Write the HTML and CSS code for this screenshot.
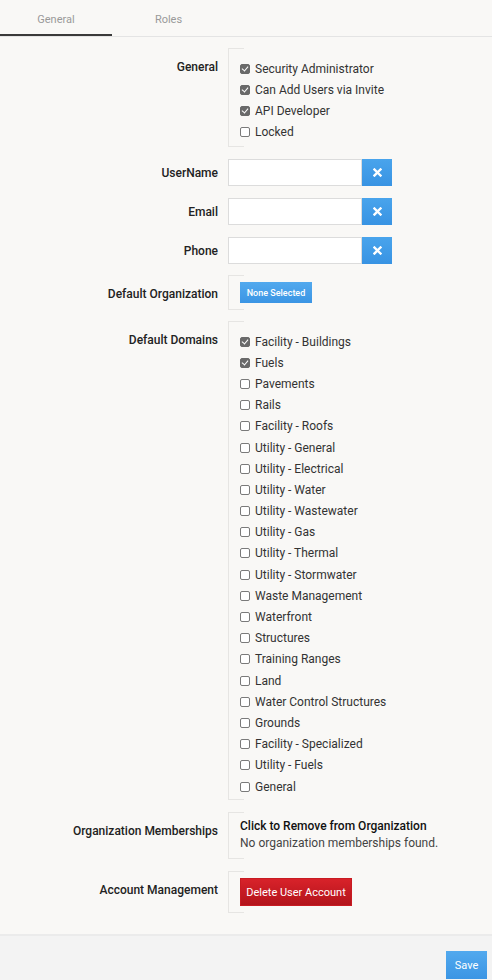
FILE: index.html
```html
<!DOCTYPE html>
<html>
<head>
<meta charset="utf-8">
<link rel="stylesheet" href="styles.css">
</head>
<body>
<div class="tabs">
  <div class="tab active">General</div>
  <div class="tab">Roles</div>
</div>
<div class="content">
  <div class="row">
    <div class="label">General</div>
    <div class="box list">
      <div class="item"><span class="cb on"></span>Security Administrator</div>
      <div class="item"><span class="cb on"></span>Can Add Users via Invite</div>
      <div class="item"><span class="cb on"></span>API Developer</div>
      <div class="item"><span class="cb"></span>Locked</div>
    </div>
  </div>
  <div class="row irow">
    <div class="label mid">UserName</div>
    <div class="field"><div class="input"></div><div class="xbtn"><svg width="9" height="9" viewBox="0 0 9 9"><path d="M1.5 1.5L7.5 7.5M7.5 1.5L1.5 7.5" stroke="#fff" stroke-width="2.4" stroke-linecap="square"/></svg></div></div>
  </div>
  <div class="row irow">
    <div class="label mid">Email</div>
    <div class="field"><div class="input"></div><div class="xbtn"><svg width="9" height="9" viewBox="0 0 9 9"><path d="M1.5 1.5L7.5 7.5M7.5 1.5L1.5 7.5" stroke="#fff" stroke-width="2.4" stroke-linecap="square"/></svg></div></div>
  </div>
  <div class="row irow last-input">
    <div class="label mid">Phone</div>
    <div class="field"><div class="input"></div><div class="xbtn"><svg width="9" height="9" viewBox="0 0 9 9"><path d="M1.5 1.5L7.5 7.5M7.5 1.5L1.5 7.5" stroke="#fff" stroke-width="2.4" stroke-linecap="square"/></svg></div></div>
  </div>
  <div class="row org-row">
    <div class="label">Default Organization</div>
    <div class="box btnbox"><div class="btn-blue small">None Selected</div></div>
  </div>
  <div class="row domains-row">
    <div class="label">Default Domains</div>
    <div class="box list domains">
      <div class="item"><span class="cb on"></span>Facility - Buildings</div>
      <div class="item"><span class="cb on"></span>Fuels</div>
      <div class="item"><span class="cb"></span>Pavements</div>
      <div class="item"><span class="cb"></span>Rails</div>
      <div class="item"><span class="cb"></span>Facility - Roofs</div>
      <div class="item"><span class="cb"></span>Utility - General</div>
      <div class="item"><span class="cb"></span>Utility - Electrical</div>
      <div class="item"><span class="cb"></span>Utility - Water</div>
      <div class="item"><span class="cb"></span>Utility - Wastewater</div>
      <div class="item"><span class="cb"></span>Utility - Gas</div>
      <div class="item"><span class="cb"></span>Utility - Thermal</div>
      <div class="item"><span class="cb"></span>Utility - Stormwater</div>
      <div class="item"><span class="cb"></span>Waste Management</div>
      <div class="item"><span class="cb"></span>Waterfront</div>
      <div class="item"><span class="cb"></span>Structures</div>
      <div class="item"><span class="cb"></span>Training Ranges</div>
      <div class="item"><span class="cb"></span>Land</div>
      <div class="item"><span class="cb"></span>Water Control Structures</div>
      <div class="item"><span class="cb"></span>Grounds</div>
      <div class="item"><span class="cb"></span>Facility - Specialized</div>
      <div class="item"><span class="cb"></span>Utility - Fuels</div>
      <div class="item"><span class="cb"></span>General</div>
    </div>
  </div>
  <div class="row">
    <div class="label">Organization Memberships</div>
    <div class="box memb">
      <div class="memb-title">Click to Remove from Organization</div>
      <div class="memb-text">No organization memberships found.</div>
    </div>
  </div>
  <div class="row">
    <div class="label">Account Management</div>
    <div class="box btnbox"><div class="btn-red">Delete User Account</div></div>
  </div>
</div>
<div class="footer">
  <div class="btn-blue save">Save</div>
</div>
</body>
</html>
```
FILE: styles.css
```css
* { box-sizing: border-box; }
html, body { margin: 0; padding: 0; }
body {
  background: #f9f8f6;
  font-family: Roboto, "Liberation Sans", Arial, sans-serif;
  color: #333;
  font-size: 12px;
  width: 492px;
  height: 980px;
  overflow: hidden;
  display: flex;
  flex-direction: column;
}
.tabs {
  display: flex;
  height: 37px;
  border-bottom: 1px solid #e4e4e4;
}
.tab {
  width: 113px;
  text-align: center;
  font-size: 11px;
  color: #9a9a9a;
  padding-top: 13px;
  line-height: 13px;
}
.tab.active {
  width: 112px;
  border-bottom: 2px solid #3a3a3a;
}
.content {
  padding-top: 11px;
  flex: 1;
}
.row {
  display: grid;
  grid-template-columns: 218px 1fr;
  column-gap: 10px;
  margin-bottom: 12px;
}
.label {
  text-align: right;
  font-weight: 500;
  color: #222;
  font-size: 12px;
  line-height: 14px;
  padding-top: 12px;
}
.label.mid { padding-top: 7px; }
.box {
  position: relative;
  border-left: 1px solid #e6e5e3;
  padding-left: 11px;
}
.box::before, .box::after {
  content: "";
  position: absolute;
  left: 0;
  width: 15px;
  height: 1px;
  background: #e6e5e3;
}
.box::before { top: 0; }
.box::after { bottom: 0; }
.list { padding-top: 10px; padding-bottom: 5px; }
.domains { padding-top: 10px; padding-bottom: 3px; }
.item {
  display: flex;
  align-items: center;
  height: 21px;
  font-size: 12px;
  color: #333;
}
.domains .item { height: 21.2px; }
.cb {
  width: 10px;
  height: 10px;
  border: 1px solid #7a7a7a;
  border-radius: 2px;
  background: #fff;
  margin-right: 5px;
  flex: none;
  position: relative;
}
.cb.on {
  background: #6a6a6a;
  border-color: #6a6a6a;
}
.cb.on::after {
  content: "";
  position: absolute;
  left: 2px;
  top: 0px;
  width: 3px;
  height: 5px;
  border-right: 1.6px solid #fff;
  border-bottom: 1.6px solid #fff;
  transform: rotate(40deg);
}
.irow { margin-bottom: 12px; }
.last-input { margin-bottom: 11px; }
.org-row { margin-bottom: 11px; }
.domains-row { margin-bottom: 12px; }
.field { display: flex; height: 27px; }
.input {
  width: 134px;
  height: 27px;
  background: #fff;
  border: 1px solid #dcdcdc;
}
.xbtn {
  width: 30px;
  height: 27px;
  background: linear-gradient(#49a4ec, #3893e3);
  display: flex;
  align-items: center;
  justify-content: center;
}
.btnbox { padding-top: 7px; padding-bottom: 7px; }
.btn-blue {
  background: linear-gradient(#52a9ee, #3b95e4);
  color: #fff;
  display: flex;
  align-items: center;
  justify-content: center;
}
.small {
  width: 72px;
  height: 21px;
  font-size: 9px;
  font-weight: 500;
}
.btn-red {
  width: 112px;
  height: 28px;
  background: linear-gradient(#d8222a, #b3141b);
  color: #fff;
  font-size: 11px;
  display: flex;
  align-items: center;
  justify-content: center;
  border: 1px solid #c81b22;
}
.memb { padding-top: 6px; padding-bottom: 7px; }
.memb-title {
  font-weight: 500;
  color: #111;
  line-height: 17px;
}
.memb-text {
  color: #444;
  line-height: 17px;
}
.footer {
  border-top: 2px solid #ebebeb;
  background: #f3f3f3;
  height: 46px;
  display: flex;
  justify-content: flex-end;
  padding-top: 15px;
  padding-right: 5px;
}
.save {
  width: 41px;
  height: 28px;
  font-size: 11px;
}
```
